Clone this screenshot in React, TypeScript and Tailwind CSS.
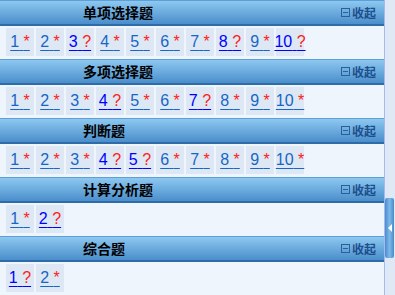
import React from 'react';

type Item = { n: number; done: boolean };

// '*' = answered, '?' = unanswered
const mk = (s: string): Item[] => s.split('').map((c, i) => ({ n: i + 1, done: c === '*' }));

const sections = [
  { title: '单项选择题', items: mk('**?****?*?') },
  { title: '多项选择题', items: mk('***?**?***') },
  { title: '判断题', items: mk('***??*****') },
  { title: '计算分析题', items: mk('*?') },
  { title: '综合题', items: mk('?*') },
];

function Cell({ item }: { item: Item }) {
  const color = item.done ? 'text-[#1766c6] decoration-[#1766c6]' : 'text-[#0000ff] decoration-[#0000ff]';
  return (
    <div className="w-[28px] h-[28px] shrink-0 bg-[#dde8f4] flex items-center justify-center">
      <a
        className={`underline underline-offset-[3px] whitespace-nowrap text-[16px] leading-none ${color}`}
        style={{ fontFamily: '"Liberation Sans", Arial, sans-serif' }}
      >
        {item.n}{' '}
        <span className="text-[#ff2020]">{item.done ? '*' : '?'}</span>
      </a>
    </div>
  );
}

function Section({ title, items }: { title: string; items: Item[] }) {
  return (
    <div>
      <div className="h-[26px] flex items-center border-t border-[#5e9fd8] border-b-2 border-b-[#2d6ca8] bg-gradient-to-b from-[#8dc8f0] to-[#4a8ecb]">
        <div className="pl-[83px] text-[14px] font-bold text-black">{title}</div>
        <div className="ml-auto pr-[8px] flex items-center text-[12px] font-bold text-[#1d4f8c]">
          <span className="w-[9px] h-[9px] border border-[#2a5f9c] flex items-center justify-center mr-[2px]">
            <span className="w-[5px] h-px bg-[#2a5f9c]" />
          </span>
          收起
        </div>
      </div>
      <div className="h-[33px] bg-[#eef5fd] pl-[6px] pt-[2px] flex gap-[2px]">
        {items.map((it) => (
          <Cell key={it.n} item={it} />
        ))}
      </div>
    </div>
  );
}

export default function App() {
  return (
    <div
      className="flex w-[395px] h-[295px] overflow-hidden bg-[#eef5fd]"
      style={{ fontFamily: '"Noto Sans CJK SC", sans-serif' }}
    >
      <div className="w-[384px] shrink-0">
        {sections.map((s) => (
          <Section key={s.title} title={s.title} items={s.items} />
        ))}
      </div>
      <div className="w-[11px] shrink-0 border-l border-[#a8b8f0] bg-[#dfe9f5]">
        <div className="mt-[198px] w-[9px] h-[60px] rounded-[2px] bg-gradient-to-r from-[#4a8ccb] via-[#7db9e8] to-[#4a8ccb] flex items-center justify-center">
          <span className="w-0 h-0 border-y-[4px] border-y-transparent border-r-[4px] border-r-white" />
        </div>
      </div>
    </div>
  );
}
